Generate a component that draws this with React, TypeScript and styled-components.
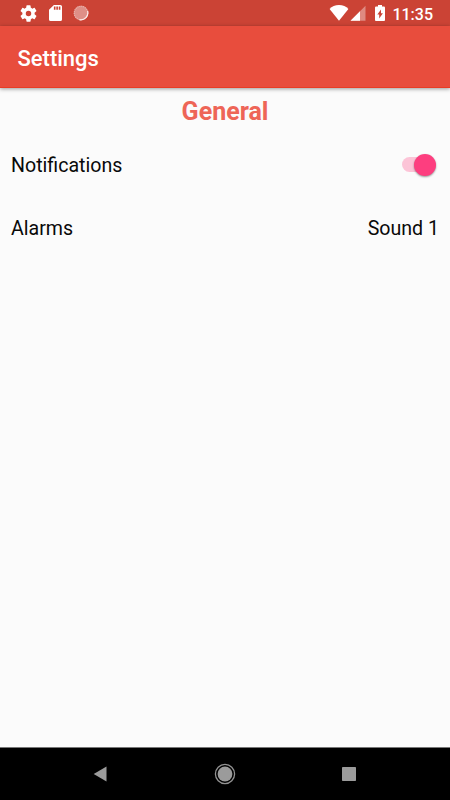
import React from 'react';
import styled, { createGlobalStyle } from 'styled-components';

const GlobalStyle = createGlobalStyle`
  * { box-sizing: border-box; }
  body { margin: 0; background: #fbfbfb; font-family: Roboto, sans-serif; }
`;

const Screen = styled.div`
  display: flex;
  flex-direction: column;
  width: 450px;
  height: 800px;
  overflow: hidden;
  background: #fbfbfb;
`;

const StatusBar = styled.header`
  display: flex;
  align-items: center;
  justify-content: space-between;
  height: 26px;
  flex: none;
  padding: 0 17px 0 20px;
  background: #cb4335;
  color: #fff;
`;

const IconGroup = styled.div<{ $gap: number }>`
  display: flex;
  align-items: center;
  gap: ${({ $gap }) => $gap}px;
  svg { display: block; }
`;

const BatterySlot = styled.span`
  display: flex;
  margin-left: 8px;
`;

const Clock = styled.time`
  margin-left: 6px;
  padding-top: 3px;
  font-size: 16px;
  font-weight: 500;
  line-height: 24px;
`;

const AppBar = styled.div`
  display: flex;
  align-items: center;
  height: 62px;
  flex: none;
  padding: 4px 17.5px 0;
  background: #e84d3d;
  border-bottom: 1px solid #e93c25;
  box-shadow: 0 1px 4px rgba(0, 0, 0, 0.4);
  z-index: 1;
`;

const Title = styled.h1`
  margin: 0;
  color: #fff;
  font-size: 22px;
  font-weight: 500;
  line-height: 28px;
`;

const Content = styled.main`
  flex: 1;
  display: flex;
  flex-direction: column;
`;

const SectionTitle = styled.h2`
  margin: 8px 0 5px;
  color: #ee6557;
  text-align: center;
  font-size: 25px;
  font-weight: 700;
  line-height: 32px;
`;

const Row = styled.div`
  display: flex;
  align-items: center;
  justify-content: space-between;
  height: 63px;
  padding: 0 11px;
`;

const RowText = styled.span`
  padding-top: 2px;
  color: #090909;
  font-size: 19.6px;
  line-height: 26px;
`;

const Switch = styled.button`
  display: flex;
  align-items: center;
  justify-content: flex-end;
  width: 31px;
  height: 15px;
  margin-right: 6.5px;
  padding: 0;
  border: 0;
  border-radius: 8px;
  background: #fcc4d7;
`;

const Thumb = styled.span`
  flex: none;
  width: 22px;
  height: 22px;
  margin-right: -3px;
  border-radius: 50%;
  background: #fd3e7f;
  box-shadow: 0 1px 2px rgba(0, 0, 0, 0.4);
`;

const NavBar = styled.nav`
  display: flex;
  align-items: center;
  justify-content: space-between;
  height: 53px;
  flex: none;
  padding: 0 94px 1px 93px;
  background: #000;
  border-top: 1px solid #777;
  svg { display: block; }
`;

const GearIcon = () => (
  <svg width="17" height="17" viewBox="2 2 20 20" fill="#fff">
    <path d="M19.14 12.94c.04-.3.06-.61.06-.94s-.02-.64-.07-.94l2.03-1.58a.49.49 0 0 0 .12-.61l-1.92-3.32a.49.49 0 0 0-.59-.22l-2.39.96a7 7 0 0 0-1.62-.94l-.36-2.54A.48.48 0 0 0 13.92 2.4h-3.84a.48.48 0 0 0-.48.41l-.36 2.54c-.59.24-1.13.57-1.62.94l-2.39-.96a.49.49 0 0 0-.59.22L2.73 8.87a.48.48 0 0 0 .12.61l2.03 1.58a7 7 0 0 0 0 1.88l-2.03 1.58a.49.49 0 0 0-.12.61l1.92 3.32c.12.22.37.29.59.22l2.39-.96c.5.38 1.03.7 1.62.94l.36 2.54c.05.24.24.41.48.41h3.84c.24 0 .44-.17.47-.41l.36-2.54a7 7 0 0 0 1.62-.94l2.39.96c.22.08.47 0 .59-.22l1.92-3.32a.48.48 0 0 0-.12-.61zM12 15.2A3.2 3.2 0 1 1 12 8.8a3.2 3.2 0 0 1 0 6.4z" />
  </svg>
);

const CardIcon = () => (
  <svg width="13" height="16" viewBox="4 2 16 20" preserveAspectRatio="none" fill="#fff">
    <path d="M18 2h-8L4 8v12a2 2 0 0 0 2 2h12a2 2 0 0 0 2-2V4a2 2 0 0 0-2-2zm-6 6h-2V4h2zm3 0h-2V4h2zm3 0h-2V4h2z" />
  </svg>
);

const SyncIcon = () => (
  <svg width="16" height="16" viewBox="0 0 16 16">
    <circle cx="8" cy="8" r="7.2" fill="#df8f87" />
    <circle cx="8" cy="8" r="6.8" fill="none" stroke="#eab5af" strokeWidth="1.1" strokeDasharray="1.2 .8" />
    <path d="M14.6 6a7 7 0 0 1-8.2 8.6" fill="none" stroke="#fbe9e7" strokeWidth="1.2" />
  </svg>
);

const WifiIcon = () => (
  <svg width="20" height="16" viewBox="0 0 20 16" fill="#fff">
    <path d="M10 15.8.6 4C2.8 1.4 6.2 0 10 0s7.2 1.4 9.4 4z" />
  </svg>
);

const SignalIcon = () => (
  <svg width="16" height="16" viewBox="0 0 16 16" fill="#fff">
    <path d="M.5 15.7 15.5.7v15z" opacity=".38" />
    <path d="M.5 15.7 10 6.2v9.5z" />
  </svg>
);

const BatteryIcon = () => (
  <svg width="10" height="16" viewBox="7 2 10 20" preserveAspectRatio="none" fill="#fff">
    <path d="M15.67 4H14V2h-4v2H8.33C7.6 4 7 4.6 7 5.33v15.33C7 21.4 7.6 22 8.33 22h7.33c.74 0 1.34-.6 1.34-1.33V5.33C17 4.6 16.4 4 15.67 4zM11.2 18.8v-5H9.3L13 7.5v4.7h1.9z" />
  </svg>
);

const BackIcon = () => (
  <svg width="14" height="16" viewBox="0 0 14 16">
    <path d="M13.5.5v15L.7 8z" fill="#9b9b9b" />
  </svg>
);

const HomeIcon = () => (
  <svg width="22" height="22" viewBox="0 0 22 22">
    <circle cx="11" cy="11" r="9.6" fill="none" stroke="#929292" strokeWidth="1.3" />
    <circle cx="11" cy="11" r="7.4" fill="#9b9b9b" />
  </svg>
);

const RecentIcon = () => (
  <svg width="14" height="14" viewBox="0 0 14 14">
    <rect width="14" height="14" rx=".7" fill="#9b9b9b" />
  </svg>
);

export default function App() {
  return (
    <>
      <GlobalStyle />
      <Screen>
        <StatusBar>
          <IconGroup $gap={11.5}>
            <GearIcon />
            <CardIcon />
            <SyncIcon />
          </IconGroup>
          <IconGroup $gap={1}>
            <WifiIcon />
            <SignalIcon />
            <BatterySlot>
              <BatteryIcon />
            </BatterySlot>
            <Clock>11:35</Clock>
          </IconGroup>
        </StatusBar>
        <AppBar>
          <Title>Settings</Title>
        </AppBar>
        <Content>
          <SectionTitle>General</SectionTitle>
          <Row>
            <RowText>Notifications</RowText>
            <Switch role="switch" aria-checked aria-label="Notifications">
              <Thumb />
            </Switch>
          </Row>
          <Row>
            <RowText>Alarms</RowText>
            <RowText>Sound 1</RowText>
          </Row>
        </Content>
        <NavBar>
          <BackIcon />
          <HomeIcon />
          <RecentIcon />
        </NavBar>
      </Screen>
    </>
  );
}
